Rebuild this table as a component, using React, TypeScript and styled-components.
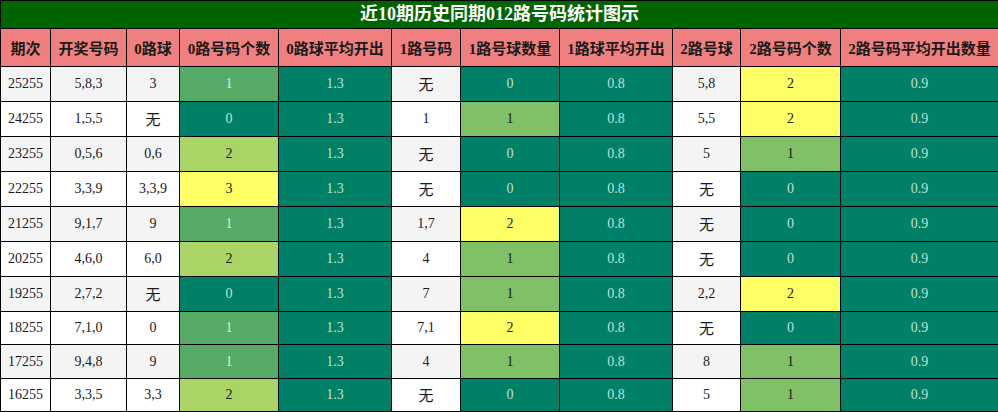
import React from "react";
import styled, { createGlobalStyle } from "styled-components";

const Global = createGlobalStyle`
  html, body { margin: 0; padding: 0; background: #fff; }
  body { font-family: "Liberation Serif", "Noto Sans CJK SC", serif; }
`;

const Table = styled.table`
  width: 998px;
  table-layout: fixed;
  border-collapse: collapse;
  font-family: "Liberation Serif", "Noto Sans CJK SC", serif;
`;

const TitleCell = styled.th`
  height: 27px;
  padding: 0;
  background: #006400;
  color: #fff;
  font-size: 18px;
  font-weight: bold;
  text-align: center;
  border: 1px solid #000;
  line-height: 27px;
`;

const HeadCell = styled.th`
  height: 37px;
  padding: 0;
  background: #f08080;
  color: #1a1a1a;
  font-size: 15px;
  font-weight: bold;
  text-align: center;
  border: 1px solid #000;
  white-space: nowrap;
`;

const Cell = styled.td<{ $bg: string; $fg: string }>`
  padding: 0;
  background: ${(p) => p.$bg};
  color: ${(p) => p.$fg};
  font-size: 14px;
  text-align: center;
  border: 1px solid #000;
`;

const Row = styled.tr<{ $h: number }>`
  height: ${(p) => p.$h}px;
`;

const Wu = styled.span`
  font-family: "Noto Sans CJK SC", sans-serif;
  font-size: 15px;
  position: relative;
  top: -1px;
`;

const widths = [50, 76, 53, 99, 113, 69, 99, 113, 68, 100, 158];

const headers = [
  "期次",
  "开奖号码",
  "0路球",
  "0路号码个数",
  "0路球平均开出",
  "1路号码",
  "1路号球数量",
  "1路球平均开出",
  "2路号球",
  "2路号码个数",
  "2路号码平均开出数量",
];

type R = [string, string, string, number, string, string, number, string, string, number, string];

const rows: R[] = [
  ["25255", "5,8,3", "3", 1, "1.3", "无", 0, "0.8", "5,8", 2, "0.9"],
  ["24255", "1,5,5", "无", 0, "1.3", "1", 1, "0.8", "5,5", 2, "0.9"],
  ["23255", "0,5,6", "0,6", 2, "1.3", "无", 0, "0.8", "5", 1, "0.9"],
  ["22255", "3,3,9", "3,3,9", 3, "1.3", "无", 0, "0.8", "无", 0, "0.9"],
  ["21255", "9,1,7", "9", 1, "1.3", "1,7", 2, "0.8", "无", 0, "0.9"],
  ["20255", "4,6,0", "6,0", 2, "1.3", "4", 1, "0.8", "无", 0, "0.9"],
  ["19255", "2,7,2", "无", 0, "1.3", "7", 1, "0.8", "2,2", 2, "0.9"],
  ["18255", "7,1,0", "0", 1, "1.3", "7,1", 2, "0.8", "无", 0, "0.9"],
  ["17255", "9,4,8", "9", 1, "1.3", "4", 1, "0.8", "8", 1, "0.9"],
  ["16255", "3,3,5", "3,3", 2, "1.3", "无", 0, "0.8", "5", 1, "0.9"],
];

const heights = [35, 35, 35, 35, 35, 35, 35, 33, 34, 33];

const TEAL = "#008066";

function scale(v: number, max: number) {
  const t = v / max;
  const r = Math.round(0 + (255 - 0) * t);
  const g = Math.round(128 + (255 - 128) * t);
  const b = 102;
  const bg = `rgb(${r},${g},${b})`;
  const fg = t === 0 ? "#bfe1d3" : t < 0.45 ? "#dcefdc" : "#1a1a1a";
  return { bg, fg };
}

const text = (s: string) => (s === "无" ? <Wu>无</Wu> : s);

export default function App() {
  return (
    <>
      <Global />
      <Table>
        <colgroup>
          {widths.map((w, i) => (
            <col key={i} style={{ width: w }} />
          ))}
        </colgroup>
        <thead>
          <tr>
            <TitleCell colSpan={11}>近10期历史同期012路号码统计图示</TitleCell>
          </tr>
          <tr>
            {headers.map((h) => (
              <HeadCell key={h}>{h}</HeadCell>
            ))}
          </tr>
        </thead>
        <tbody>
          {rows.map((r, i) => {
            const plain = i % 2 === 0 ? "#f4f4f4" : "#ffffff";
            const ink = "#1a1a1a";
            const c0 = scale(r[3], 3);
            const c1 = scale(r[6], 2);
            const c2 = scale(r[9], 2);
            const avgFg = "#bfe1d3";
            return (
              <Row key={r[0]} $h={heights[i]}>
                <Cell $bg={plain} $fg={ink}>{r[0]}</Cell>
                <Cell $bg={plain} $fg={ink}>{r[1]}</Cell>
                <Cell $bg={plain} $fg={ink}>{text(r[2])}</Cell>
                <Cell $bg={c0.bg} $fg={c0.fg}>{r[3]}</Cell>
                <Cell $bg={TEAL} $fg={avgFg}>{r[4]}</Cell>
                <Cell $bg={plain} $fg={ink}>{text(r[5])}</Cell>
                <Cell $bg={c1.bg} $fg={c1.fg}>{r[6]}</Cell>
                <Cell $bg={TEAL} $fg={avgFg}>{r[7]}</Cell>
                <Cell $bg={plain} $fg={ink}>{text(r[8])}</Cell>
                <Cell $bg={c2.bg} $fg={c2.fg}>{r[9]}</Cell>
                <Cell $bg={TEAL} $fg={avgFg}>{r[10]}</Cell>
              </Row>
            );
          })}
        </tbody>
      </Table>
    </>
  );
}
